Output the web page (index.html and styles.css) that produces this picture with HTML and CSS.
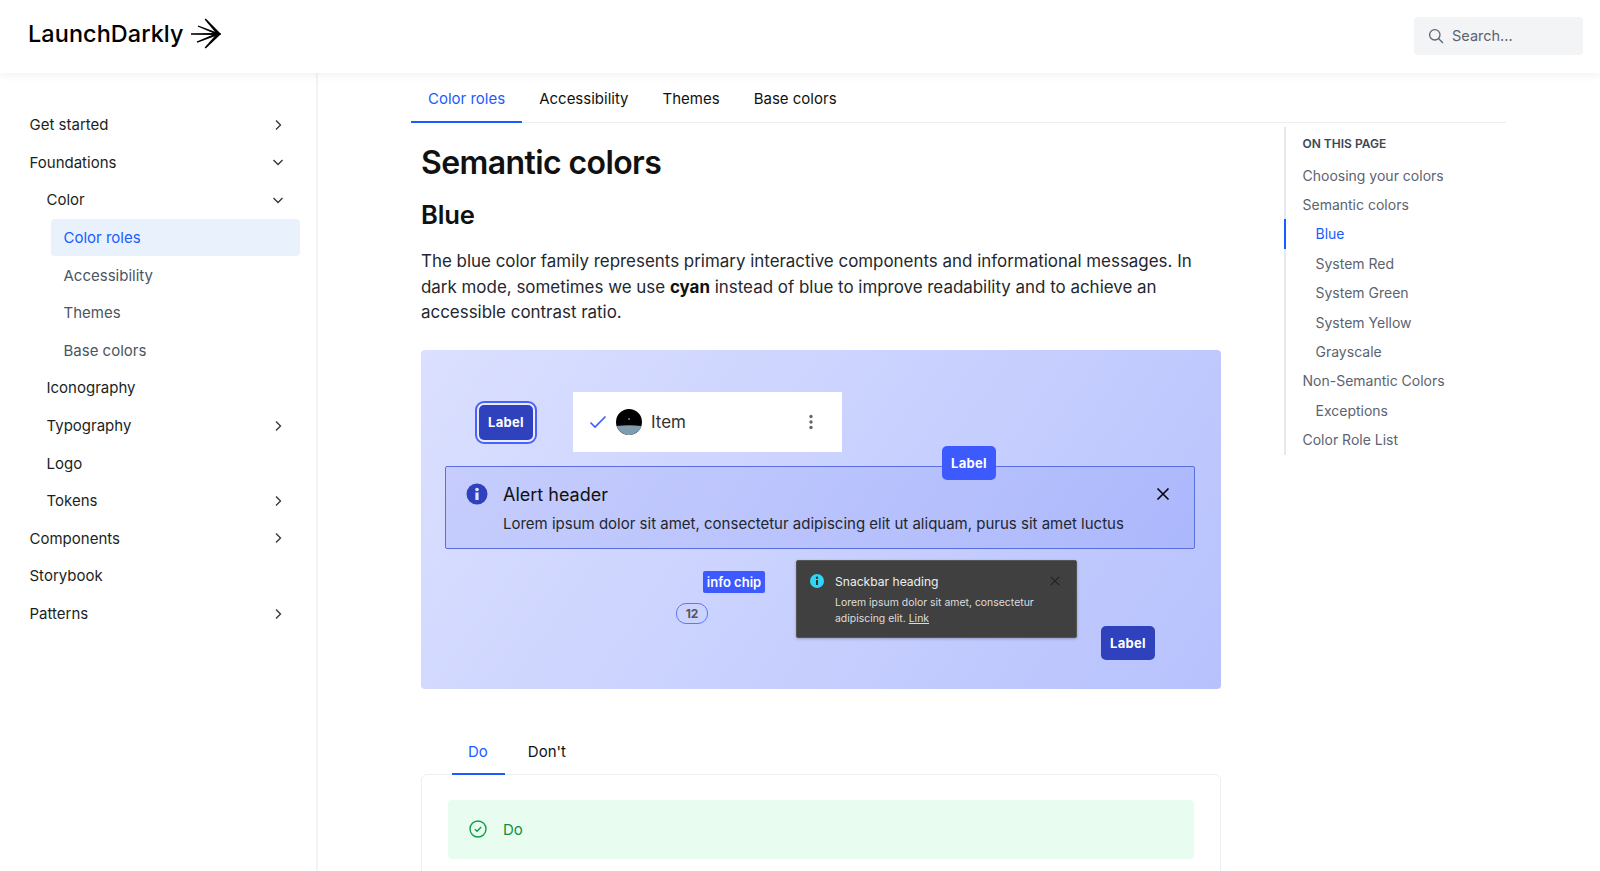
FILE: index.html
```html
<!DOCTYPE html>
<html lang="en">
<head>
    <meta charset="UTF-8">
    <meta name="viewport" content="width=device-width, initial-scale=1.0">
    <title>Semantic colors</title>
    <link rel="stylesheet" href="styles.css">
</head>
<body>
    <header class="topbar">
        <a class="logo">
            <span class="logo-text">LaunchDarkly</span>
            <svg class="logo-mark" width="32" height="31" viewBox="0 0 32 31" fill="#000">
                <path d="M1 15.3L26 15L31 16L26 17L1 16.7Z"/>
                <path d="M15.8 .6L31 16L28 17.5L14.6 1.6Z"/>
                <path d="M8.3 7.4L31 16L28 17.2L7.7 8.6Z"/>
                <path d="M15.8 30.4L31 16L28 14.5L14.6 29.4Z"/>
                <path d="M7.3 24.8L31 16L28 14.6L6.7 23.6Z"/>
            </svg>
        </a>
        <div class="search">
            <svg width="16" height="16" viewBox="0 0 16 16" fill="none" stroke="#5c6370" stroke-width="1.3">
                <circle cx="6.8" cy="6.8" r="5.2"/>
                <path d="M10.7 10.7L15 15"/>
            </svg>
            <span>Search...</span>
        </div>
    </header>

    <div class="layout">
        <nav class="sidebar">
            <a class="nav-item">Get started <svg class="chev" viewBox="0 0 16 16"><path d="M6 3.5L10.5 8L6 12.5"/></svg></a>
            <a class="nav-item">Foundations <svg class="chev" viewBox="0 0 16 16"><path d="M3.5 6L8 10.5L12.5 6"/></svg></a>
            <a class="nav-item level2">Color <svg class="chev" viewBox="0 0 16 16"><path d="M3.5 6L8 10.5L12.5 6"/></svg></a>
            <a class="nav-item level3 active">Color roles</a>
            <a class="nav-item level3">Accessibility</a>
            <a class="nav-item level3">Themes</a>
            <a class="nav-item level3">Base colors</a>
            <a class="nav-item level2">Iconography</a>
            <a class="nav-item level2">Typography <svg class="chev" viewBox="0 0 16 16"><path d="M6 3.5L10.5 8L6 12.5"/></svg></a>
            <a class="nav-item level2">Logo</a>
            <a class="nav-item level2">Tokens <svg class="chev" viewBox="0 0 16 16"><path d="M6 3.5L10.5 8L6 12.5"/></svg></a>
            <a class="nav-item">Components <svg class="chev" viewBox="0 0 16 16"><path d="M6 3.5L10.5 8L6 12.5"/></svg></a>
            <a class="nav-item">Storybook</a>
            <a class="nav-item">Patterns <svg class="chev" viewBox="0 0 16 16"><path d="M6 3.5L10.5 8L6 12.5"/></svg></a>
        </nav>

        <main class="main">
            <div class="tabs">
                <a class="tab active">Color roles</a>
                <a class="tab">Accessibility</a>
                <a class="tab">Themes</a>
                <a class="tab">Base colors</a>
            </div>

            <div class="columns">
                <article class="content">
                    <h1>Semantic colors</h1>
                    <h2>Blue</h2>
                    <p>The blue color family represents primary interactive components and informational messages. In dark mode, sometimes we use <strong>cyan</strong> instead of blue to improve readability and to achieve an accessible contrast ratio.</p>

                    <div class="hero">
                        <div class="focus-ring"><span class="btn btn-dark">Label</span></div>

                        <div class="list-item">
                            <svg width="18" height="14" viewBox="0 0 18 14" fill="none" stroke="#3d5afe" stroke-width="1.6"><path d="M1.5 7.5L6 12L16.5 1.5"/></svg>
                            <svg class="avatar" width="26" height="26" viewBox="0 0 26 26">
                                <circle cx="13" cy="13" r="13" fill="#000"/>
                                <path d="M.6 17Q13 15.5 25.4 17A13 13 0 0 1 .6 17Z" fill="#7f9bac"/>
                                <circle cx="13" cy="10" r=".8" fill="#ddd"/>
                            </svg>
                            <span class="list-label">Item</span>
                            <svg class="kebab" width="4" height="16" viewBox="0 0 4 16" fill="#666"><circle cx="2" cy="2.5" r="1.7"/><circle cx="2" cy="8" r="1.7"/><circle cx="2" cy="13.5" r="1.7"/></svg>
                        </div>

                        <div class="alert">
                            <svg class="alert-icon" width="22" height="22" viewBox="0 0 22 22"><circle cx="11" cy="11" r="10.5" fill="#2f41bd"/><circle cx="11" cy="6.5" r="1.8" fill="#dfe3ff"/><rect x="9.4" y="9.5" width="3.2" height="7.5" fill="#dfe3ff"/></svg>
                            <div class="alert-body">
                                <div class="alert-title">Alert header</div>
                                <div class="alert-text">Lorem ipsum dolor sit amet, consectetur adipiscing elit ut aliquam, purus sit amet luctus</div>
                            </div>
                            <svg class="alert-close" width="14" height="14" viewBox="0 0 14 14" stroke="#000" stroke-width="1.6"><path d="M1.5 1.5L12.5 12.5M12.5 1.5L1.5 12.5"/></svg>
                        </div>

                        <span class="btn btn-blue">Label</span>
                        <span class="chip">info chip</span>
                        <span class="count">12</span>

                        <div class="snackbar">
                            <svg class="snack-icon" width="14" height="14" viewBox="0 0 14 14"><circle cx="7" cy="7" r="7" fill="#2fd6f5"/><circle cx="7" cy="3.8" r="1.2" fill="#333"/><rect x="6" y="6" width="2" height="5" fill="#333"/></svg>
                            <div class="snack-body">
                                <div class="snack-title">Snackbar heading</div>
                                <div class="snack-text">Lorem ipsum dolor sit amet, consectetur adipiscing elit. <u>Link</u></div>
                            </div>
                            <svg class="snack-close" width="10" height="10" viewBox="0 0 10 10" stroke="#222" stroke-width="1.1"><path d="M.8.8L9.2 9.2M9.2.8L.8 9.2"/></svg>
                        </div>

                        <span class="btn btn-dark btn-corner">Label</span>
                    </div>

                    <div class="do-tabs">
                        <a class="do-tab active">Do</a>
                        <a class="do-tab">Don't</a>
                    </div>
                    <div class="do-panel">
                        <div class="do-banner">
                            <svg width="18" height="18" viewBox="0 0 18 18" fill="none" stroke="#0f9d4a" stroke-width="1.4"><circle cx="9" cy="9" r="8"/><path d="M5.8 9.2L8 11.2L12.2 7"/></svg>
                            <span>Do</span>
                        </div>
                    </div>
                </article>

                <aside class="toc">
                    <div class="toc-title">ON THIS PAGE</div>
                    <a class="toc-link">Choosing your colors</a>
                    <a class="toc-link">Semantic colors</a>
                    <a class="toc-link sub active">Blue</a>
                    <a class="toc-link sub">System Red</a>
                    <a class="toc-link sub">System Green</a>
                    <a class="toc-link sub">System Yellow</a>
                    <a class="toc-link sub">Grayscale</a>
                    <a class="toc-link">Non-Semantic Colors</a>
                    <a class="toc-link sub">Exceptions</a>
                    <a class="toc-link">Color Role List</a>
                </aside>
            </div>
        </main>
    </div>
</body>
</html>
```

FILE: styles.css
```css
* {
    box-sizing: border-box;
}
html, body {
    height: 100%;
}
body {
    margin: 0;
    font-family: Inter, "Liberation Sans", sans-serif;
    color: #111;
    background: #fff;
    overflow: hidden;
}
.topbar {
    position: relative;
    z-index: 2;
    height: 73px;
    padding: 0 17px 0 28px;
    display: flex;
    align-items: center;
    justify-content: space-between;
    background: #fff;
    box-shadow: 0 2px 10px rgba(0, 0, 0, 0.06);
}
.logo {
    display: flex;
    align-items: center;
    gap: 6px;
    margin-top: -7px;
}
.logo-text {
    font-family: Inter, sans-serif;
    font-size: 23.4px;
    font-weight: 500;
    letter-spacing: 0.1px;
    color: #000;
}
.search {
    width: 169px;
    height: 38px;
    margin-top: -1px;
    padding-left: 14px;
    display: flex;
    align-items: center;
    gap: 8px;
    font-size: 14.5px;
    color: #5c6370;
    background: #f3f4f6;
    border-radius: 4px;
}
.search span {
    margin-top: -1px;
}
.layout {
    display: flex;
    height: calc(100% - 73px);
}
.sidebar {
    flex: 0 0 318px;
    padding: 33px 16px 0 0;
    border-right: 2px solid #f2f3f5;
}
.nav-item {
    height: 37.6px;
    padding: 0 14px 0 29.5px;
    display: flex;
    align-items: center;
    justify-content: space-between;
    font-size: 15px;
    color: #1b1f24;
}
.level2 {
    padding-left: 46.5px;
}
.level3 {
    margin-left: 51px;
    padding-left: 12.5px;
    color: #4b5563;
    border-radius: 4px;
}
.nav-item.active {
    color: #1a5cff;
    background: #e9f1fd;
}
.chev {
    width: 16px;
    height: 16px;
    fill: none;
    stroke: #333;
    stroke-width: 1.3;
}
.main {
    flex: 1;
    padding: 8px 94px 0 93px;
}
.tabs {
    display: flex;
    height: 42px;
    border-bottom: 1px solid #eceef1;
}
.tab {
    padding: 0 17px 7px;
    display: flex;
    align-items: center;
    height: 42px;
    font-size: 15px;
    color: #111;
}
.tab.active,
.do-tab.active {
    color: #1a5cff;
    box-shadow: inset 0 -2px 0 #1a5cff;
}
.columns {
    display: flex;
    justify-content: space-between;
}
.content {
    width: 800px;
    margin-left: 10px;
}
h1 {
    margin: 20px 0 0;
    font-size: 32px;
    line-height: 40px;
    font-weight: 600;
    letter-spacing: -0.6px;
}
h2 {
    margin: 16px 0 0;
    font-size: 25.6px;
    line-height: 32px;
    font-weight: 600;
    letter-spacing: -0.2px;
}
p {
    margin: 18px 0 0;
    font-size: 16.93px;
    line-height: 25.5px;
    color: #23272e;
}
p strong {
    font-weight: 700;
    color: #111;
}
/* hero is a free canvas of sample components */
.hero {
    position: relative;
    height: 339px;
    margin-top: 24px;
    background: linear-gradient(125deg, #dbe0ff 0%, #b7c2fd 100%);
    border-radius: 4px;
}
.btn {
    position: absolute;
    display: flex;
    align-items: center;
    justify-content: center;
    width: 54px;
    height: 34px;
    font-size: 13px;
    font-weight: 700;
    letter-spacing: 0.3px;
    color: #fff;
    border-radius: 5px;
}
.btn-dark {
    background: #2f41bd;
}
.btn-blue {
    left: 521px;
    top: 96px;
    background: #3d5afe;
}
.btn-corner {
    left: 680px;
    top: 276px;
}
.focus-ring {
    position: absolute;
    left: 54px;
    top: 51px;
    width: 62px;
    height: 43px;
    border: 2px solid #4763fa;
    border-radius: 9px;
    background: #e9ecff;
}
.focus-ring .btn {
    left: 2px;
    top: 2px;
    width: 54px;
    height: 35px;
}
.list-item {
    position: absolute;
    left: 152px;
    top: 42px;
    width: 269px;
    height: 60px;
    padding: 0 29px 0 16px;
    display: flex;
    align-items: center;
    background: #fff;
}
.avatar {
    margin-left: 9px;
}
.list-label {
    flex: 1;
    margin: 1px 0 0 9px;
    font-size: 17px;
    color: #333;
}
.alert {
    position: absolute;
    left: 24px;
    top: 116px;
    width: 750px;
    height: 83px;
    padding: 16px 24px 0 20px;
    display: flex;
    align-items: flex-start;
    background: linear-gradient(125deg, #c6cdfd 0%, #acb8fc 100%);
    border: 1px solid #5a6ee0;
    border-radius: 2px;
}
.alert-icon {
    flex: none;
}
.alert-body {
    flex: 1;
    margin-left: 15px;
}
.alert-title {
    font-size: 18px;
    line-height: 24px;
    color: #111;
}
.alert-text {
    margin-top: 5px;
    font-size: 15px;
    line-height: 24px;
    color: #23272e;
}
.alert-close {
    margin-top: 4px;
}
.chip {
    position: absolute;
    left: 282px;
    top: 221px;
    width: 62px;
    height: 22px;
    display: flex;
    align-items: center;
    justify-content: center;
    font-size: 13px;
    font-weight: 600;
    color: #fff;
    background: #3d5afe;
    border-radius: 2px;
}
.count {
    position: absolute;
    left: 255px;
    top: 253px;
    width: 32px;
    height: 21px;
    display: flex;
    align-items: center;
    justify-content: center;
    font-size: 12px;
    font-weight: 700;
    color: #555;
    border: 1px solid #5b76ff;
    border-radius: 10px;
}
.snackbar {
    position: absolute;
    left: 375px;
    top: 210px;
    width: 281px;
    height: 78px;
    padding: 12px 16px 0 13px;
    display: flex;
    align-items: flex-start;
    background: #404040;
    border: 1px solid #555;
    border-radius: 2px;
    box-shadow: 0 1px 3px rgba(0, 0, 0, 0.25);
}
.snack-icon {
    flex: none;
    margin-top: 1.5px;
}
.snack-body {
    flex: 1;
    margin-left: 11px;
}
.snack-title {
    font-size: 12.1px;
    line-height: 17px;
    color: #eee;
}
.snack-text {
    margin-top: 5px;
    font-size: 10.45px;
    line-height: 16px;
    color: #ddd;
}
.snack-close {
    margin-top: 3px;
}
.do-tabs {
    display: flex;
    height: 46px;
    margin-top: 39px;
    padding-left: 31px;
}
.do-tab {
    padding: 0 17px 0 16px;
    height: 47px;
    position: relative;
    z-index: 1;
    display: flex;
    align-items: center;
    font-size: 15px;
    color: #111;
}
.do-tab + .do-tab {
    padding: 0 23px;
}
.do-panel {
    height: 200px;
    padding: 25px 26px 0;
    border: 1px solid #eceef1;
    border-radius: 6px;
}
.do-banner {
    height: 59px;
    padding-left: 21px;
    display: flex;
    align-items: center;
    gap: 16px;
    font-size: 15px;
    color: #0f8f45;
    background: #e8fdf0;
    border-radius: 4px;
}
.toc {
    width: 222px;
    height: 328px;
    margin-top: 4px;
    padding: 5px 0 0 16.5px;
    border-left: 2px solid #e5e8ec;
}
.toc-title {
    height: 24px;
    font-size: 12px;
    line-height: 24px;
    font-weight: 600;
    color: #3e4652;
}
.toc-link {
    display: flex;
    align-items: center;
    height: 29.4px;
    font-size: 14px;
    color: #5c6370;
}
.toc-title + .toc-link {
    margin-top: 4.5px;
}
.toc-link.sub {
    padding-left: 13px;
}
.toc-link.active {
    position: relative;
    color: #1a5cff;
}
.toc-link.active::before {
    content: "";
    position: absolute;
    left: -18.5px;
    top: 0;
    width: 2px;
    height: 100%;
    background: #1a5cff;
}
```
